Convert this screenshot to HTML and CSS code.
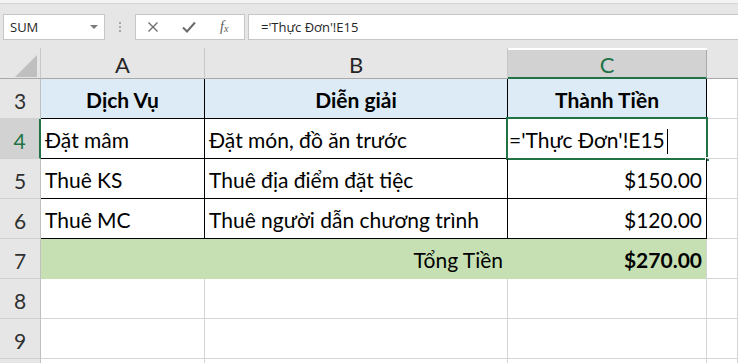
FILE: index.html
```html
<!DOCTYPE html>
<html lang="vi">
<head>
<meta charset="utf-8">
<link rel="stylesheet" href="styles.css">
</head>
<body>
<div class="app">
  <div class="topstrip"></div>
  <div class="fbar">
    <div class="namebox"><span class="nb-text">SUM</span><span class="nb-arrow"></span></div>
    <div class="dots"><span></span><span></span><span></span></div>
    <div class="btns">
      <svg class="ic ic-x" width="14" height="14" viewBox="0 0 14 14"><path d="M2.5 2.5 L11.5 11.5 M11.5 2.5 L2.5 11.5" stroke="#6b6b6b" stroke-width="1.3" fill="none"/></svg>
      <svg class="ic ic-ok" width="16" height="14" viewBox="0 0 16 14"><path d="M2 7.5 L6 11.5 L14 2.5" stroke="#6b6b6b" stroke-width="2" fill="none"/></svg>
      <span class="fx">f<sub>x</sub></span>
    </div>
    <div class="finput">='Thực Đơn'!E15</div>
  </div>
  <div class="sheet">
    <div class="ch corner"><span class="tri"></span></div>
    <div class="ch">A</div>
    <div class="ch">B</div>
    <div class="ch ch-sel">C</div>
    <div class="ch ch-rest"></div>

    <div class="rh">3</div>
    <div class="c hd bl-r bl-b">Dịch Vụ</div>
    <div class="c hd bl-r bl-b">Diễn giải</div>
    <div class="c hd bl-r bl-b">Thành Tiền</div>
    <div class="c"></div>

    <div class="rh rh-sel">4</div>
    <div class="c bl-r bl-b">Đặt mâm</div>
    <div class="c bl-r bl-b">Đặt món, đồ ăn trước</div>
    <div class="c bl-r bl-b active"><span class="edit">='Thực Đơn'!E15<span class="caret"></span></span><span class="selbox"></span><span class="handle"></span></div>
    <div class="c"></div>

    <div class="rh">5</div>
    <div class="c bl-r bl-b">Thuê KS</div>
    <div class="c bl-r bl-b">Thuê địa điểm đặt tiệc</div>
    <div class="c bl-r bl-b num">$150.00</div>
    <div class="c"></div>

    <div class="rh">6</div>
    <div class="c bl-r bl-b">Thuê MC</div>
    <div class="c bl-r bl-b">Thuê người dẫn chương trình</div>
    <div class="c bl-r bl-b num">$120.00</div>
    <div class="c"></div>

    <div class="rh">7</div>
    <div class="c tot tot-in"></div>
    <div class="c tot tot-in num">Tổng Tiền</div>
    <div class="c tot num strong">$270.00</div>
    <div class="c"></div>

    <div class="rh">8</div>
    <div class="c"></div>
    <div class="c"></div>
    <div class="c"></div>
    <div class="c"></div>

    <div class="rh">9</div>
    <div class="c"></div>
    <div class="c"></div>
    <div class="c"></div>
    <div class="c"></div>

    <div class="rh"></div>
    <div class="c"></div>
    <div class="c"></div>
    <div class="c"></div>
    <div class="c"></div>
  </div>
</div>
</body>
</html>
```

FILE: styles.css
```css
* { box-sizing: border-box; }
html, body { margin: 0; padding: 0; }
body {
  width: 738px;
  height: 363px;
  overflow: hidden;
  background: #e6e6e6;
  font-family: "Lato", "Open Sans", sans-serif;
}
.app { width: 738px; }

.topstrip {
  height: 4px;
  background: #f3f3f3;
  border-bottom: 1px solid #d5d5d5;
}

.fbar {
  height: 44px;
  display: flex;
  align-items: flex-start;
  padding-top: 10px;
  padding-left: 3px;
  background: #e6e6e6;
}
.namebox {
  width: 102px;
  height: 26px;
  background: #fff;
  border: 1px solid #c6c6c6;
  display: flex;
  align-items: center;
  justify-content: space-between;
  padding: 0 6px 0 6px;
  font-family: "Open Sans", "Noto Sans", sans-serif;
  font-size: 13px;
  color: #262626;
}
.nb-arrow {
  width: 0; height: 0;
  border-left: 4px solid transparent;
  border-right: 4px solid transparent;
  border-top: 4px solid #7a7a7a;
}
.dots {
  width: 30px;
  height: 26px;
  display: flex;
  flex-direction: column;
  align-items: center;
  justify-content: center;
  gap: 2px;
}
.dots span {
  width: 2px; height: 2px;
  background: #a8a8a8;
}
.btns {
  width: 110px;
  height: 26px;
  background: #fff;
  border: 1px solid #c6c6c6;
  display: flex;
  align-items: center;
  padding-left: 10px;
}
.ic { display: block; flex: none; }
.ic-ok { margin-left: 21px; }
.fx {
  margin-left: 23px;
  font-family: "Liberation Serif", "DejaVu Serif", serif;
  font-style: italic;
  font-size: 14px;
  color: #5a5a5a;
  line-height: 1;
}
.fx sub { font-size: 10px; vertical-align: -1px; }
.finput {
  flex: 1;
  margin-left: 3px;
  height: 26px;
  background: #fff;
  border: 1px solid #c6c6c6;
  border-right: none;
  font-family: "Open Sans", "Noto Sans", sans-serif;
  font-size: 13px;
  color: #262626;
  padding-left: 12px;
  display: flex;
  align-items: center;
}

.sheet {
  display: grid;
  grid-template-columns: 41px 164px 303px 199px 1fr;
  grid-template-rows: 31px repeat(8, 40px);
  background: #fff;
}
.ch {
  background: #e6e6e6;
  border-right: 1px solid #c8c8c8;
  border-bottom: 1px solid #a9a9a9;
  display: flex;
  align-items: center;
  justify-content: center;
  font-size: 22px;
  color: #262626;
  padding-top: 2px;
}
.ch-sel {
  background: #d2d2d2;
  color: #217346;
  border-bottom: 2px solid #217346;
  margin-top: 2px;
  border-right-color: #aaaaaa;
}
.ch-rest { border-right: none; }
.corner {
  justify-content: flex-end;
  align-items: flex-end;
  padding: 0 3px 1px 0;
}
.tri {
  width: 0; height: 0;
  border-left: 22px solid transparent;
  border-bottom: 22px solid #bfbfbf;
}
.rh {
  background: #e6e6e6;
  border-right: 1px solid #c0c0c0;
  border-bottom: 1px solid #d0d0d0;
  display: flex;
  align-items: flex-end;
  justify-content: center;
  padding-bottom: 5px;
  font-size: 21px;
  color: #303030;
}
.rh-sel {
  background: #d2d2d2;
  color: #217346;
  border-right: 2px solid #217346;
}
.c {
  border-right: 1px solid #d4d4d4;
  border-bottom: 1px solid #d4d4d4;
  display: flex;
  align-items: flex-end;
  padding: 0 4px 6px 4px;
  font-size: 21px;
  color: #000;
  white-space: nowrap;
  position: relative;
}
.bl-r { border-right-color: #000; }
.bl-b { border-bottom-color: #000; }
.hd {
  background: #ddebf7;
  font-weight: 700;
  justify-content: center;
}
.num { justify-content: flex-end; }
.tot { background: #c6e0b4; border-bottom-color: #c6e0b4; }
.tot-in { border-right-color: #c6e0b4; }
.strong { font-weight: 700; }
.active { padding-left: 1px; }
.edit { display: inline-flex; align-items: flex-end; }
.caret {
  display: inline-block;
  width: 1px;
  height: 25px;
  background: #000;
  margin-left: 2px;
  margin-bottom: -2px;
}
.selbox {
  position: absolute;
  left: -2px; top: -2px; right: -2px; bottom: -2px;
  border: 2px solid #217346;
  pointer-events: none;
}
.handle {
  position: absolute;
  right: -4px; bottom: -4px;
  width: 5px; height: 5px;
  background: #217346;
  border: 1px solid #fff;
}
```
